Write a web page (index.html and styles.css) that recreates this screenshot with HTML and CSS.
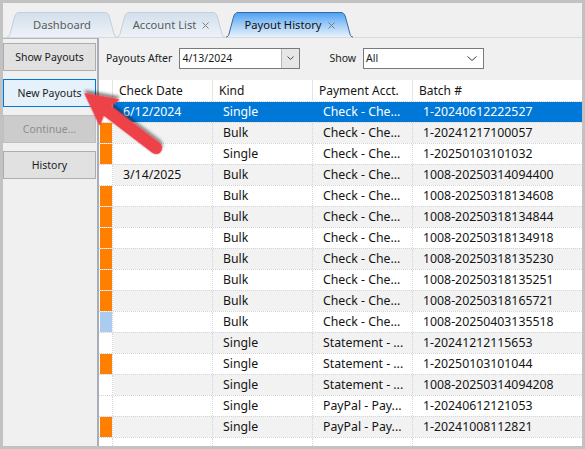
FILE: index.html
```html
<!DOCTYPE html>
<html lang="en">
<head>
<meta charset="utf-8">
<title>Payout History</title>
<link rel="stylesheet" href="styles.css">
</head>
<body>
<div class="window">
  <nav class="tabstrip">
    <div class="tab tab-dashboard">
      <svg class="tab-shape" viewBox="0 0 110 25" preserveAspectRatio="none">
        <defs>
          <linearGradient id="tabIdle1" x1="0" y1="0" x2="0" y2="1">
            <stop offset="0" stop-color="#d1dfed"/>
            <stop offset="1" stop-color="#eef2f7"/>
          </linearGradient>
        </defs>
        <path d="M0,25 C1.5,25 2.5,24 3,22 L7.5,5 C8.3,2 9.8,0.5 12,0.5 H98 C100.2,0.5 101.7,2 102.5,5 L107,22 C107.5,24 108.5,25 110,25" fill="url(#tabIdle1)" stroke="#c6cfda" stroke-width="1"/>
      </svg>
      <span class="tab-label">Dashboard</span>
    </div>
    <div class="tab tab-accounts">
      <svg class="tab-shape" viewBox="0 0 108 25" preserveAspectRatio="none">
        <defs>
          <linearGradient id="tabIdle2" x1="0" y1="0" x2="0" y2="1">
            <stop offset="0" stop-color="#d1dfed"/>
            <stop offset="1" stop-color="#eef2f7"/>
          </linearGradient>
        </defs>
        <path d="M0,25 C1.5,25 2.5,24 3,22 L7.5,5 C8.3,2 9.8,0.5 12,0.5 H96 C98.2,0.5 99.7,2 100.5,5 L105,22 C105.5,24 106.5,25 108,25" fill="url(#tabIdle2)" stroke="#c6cfda" stroke-width="1"/>
      </svg>
      <span class="tab-label">Account List</span>
      <svg class="tab-close" viewBox="0 0 7 7"><path d="M0.5,0.5 L6.5,6.5 M6.5,0.5 L0.5,6.5" stroke="#7d7d7d" stroke-width="1"/></svg>
    </div>
    <div class="tab tab-payouts active">
      <svg class="tab-shape" viewBox="0 0 127 25" preserveAspectRatio="none">
        <defs>
          <linearGradient id="tabActive" x1="0" y1="0" x2="0" y2="1">
            <stop offset="0" stop-color="#4aa1f6"/>
            <stop offset="0.45" stop-color="#98c8f6"/>
            <stop offset="1" stop-color="#e8f2fc"/>
          </linearGradient>
        </defs>
        <path d="M0,25 C1.5,25 2.5,24 3,22 L7.5,5 C8.3,2 9.8,0.5 12,0.5 H115 C117.2,0.5 118.7,2 119.5,5 L124,22 C124.5,24 125.5,25 127,25" fill="url(#tabActive)" stroke="#3a6a9c" stroke-width="1"/>
      </svg>
      <span class="tab-label">Payout History</span>
      <svg class="tab-close" viewBox="0 0 7 7"><path d="M0.5,0.5 L6.5,6.5 M6.5,0.5 L0.5,6.5" stroke="#6d7a88" stroke-width="1"/></svg>
    </div>
  </nav>

  <div class="workspace">
    <aside class="sidebar">
      <button class="side-btn">Show Payouts</button>
      <button class="side-btn focused">New Payouts</button>
      <button class="side-btn" disabled>Continue...</button>
      <button class="side-btn">History</button>
    </aside>

    <section class="main">
      <div class="filters">
        <span class="filter-label">Payouts After</span>
        <div class="combo combo-date">
          <span class="combo-text">4/13/2024</span>
          <span class="combo-btn">
            <svg class="chev-sm" viewBox="0 0 7 4"><polyline points="0.5,0.5 3.5,3.5 6.5,0.5" fill="none" stroke="#4a4a4a" stroke-width="1"/></svg>
          </span>
        </div>
        <span class="filter-label label-show">Show</span>
        <div class="combo combo-show">
          <span class="combo-text">All</span>
          <svg class="chev" viewBox="0 0 10 5"><polyline points="0.5,0.5 5,4.5 9.5,0.5" fill="none" stroke="#3c3c3c" stroke-width="1"/></svg>
        </div>
      </div>

      <div class="grid">
        <div class="row head">
          <div class="cell ind-col"></div>
          <div class="cell">Check Date</div>
          <div class="cell">Kind</div>
          <div class="cell">Payment Acct.</div>
          <div class="cell">Batch #</div>
        </div>
        <div class="row sel">
          <div class="cell ind-col"><span class="ind"></span></div>
          <div class="cell">6/12/2024</div>
          <div class="cell">Single</div>
          <div class="cell">Check - Che...</div>
          <div class="cell">1-20240612222527</div>
        </div>
        <div class="row">
          <div class="cell ind-col"><span class="ind orange"></span></div>
          <div class="cell"></div>
          <div class="cell">Bulk</div>
          <div class="cell">Check - Che...</div>
          <div class="cell">1-20241217100057</div>
        </div>
        <div class="row">
          <div class="cell ind-col"><span class="ind orange"></span></div>
          <div class="cell"></div>
          <div class="cell">Single</div>
          <div class="cell">Check - Che...</div>
          <div class="cell">1-20250103101032</div>
        </div>
        <div class="row">
          <div class="cell ind-col"><span class="ind"></span></div>
          <div class="cell">3/14/2025</div>
          <div class="cell">Bulk</div>
          <div class="cell">Check - Che...</div>
          <div class="cell">1008-20250314094400</div>
        </div>
        <div class="row">
          <div class="cell ind-col"><span class="ind orange"></span></div>
          <div class="cell"></div>
          <div class="cell">Bulk</div>
          <div class="cell">Check - Che...</div>
          <div class="cell">1008-20250318134608</div>
        </div>
        <div class="row">
          <div class="cell ind-col"><span class="ind orange"></span></div>
          <div class="cell"></div>
          <div class="cell">Bulk</div>
          <div class="cell">Check - Che...</div>
          <div class="cell">1008-20250318134844</div>
        </div>
        <div class="row">
          <div class="cell ind-col"><span class="ind orange"></span></div>
          <div class="cell"></div>
          <div class="cell">Bulk</div>
          <div class="cell">Check - Che...</div>
          <div class="cell">1008-20250318134918</div>
        </div>
        <div class="row">
          <div class="cell ind-col"><span class="ind orange"></span></div>
          <div class="cell"></div>
          <div class="cell">Bulk</div>
          <div class="cell">Check - Che...</div>
          <div class="cell">1008-20250318135230</div>
        </div>
        <div class="row">
          <div class="cell ind-col"><span class="ind orange"></span></div>
          <div class="cell"></div>
          <div class="cell">Bulk</div>
          <div class="cell">Check - Che...</div>
          <div class="cell">1008-20250318135251</div>
        </div>
        <div class="row">
          <div class="cell ind-col"><span class="ind orange"></span></div>
          <div class="cell"></div>
          <div class="cell">Bulk</div>
          <div class="cell">Check - Che...</div>
          <div class="cell">1008-20250318165721</div>
        </div>
        <div class="row">
          <div class="cell ind-col"><span class="ind pending"></span></div>
          <div class="cell"></div>
          <div class="cell">Bulk</div>
          <div class="cell">Check - Che...</div>
          <div class="cell">1008-20250403135518</div>
        </div>
        <div class="row">
          <div class="cell ind-col"><span class="ind"></span></div>
          <div class="cell"></div>
          <div class="cell">Single</div>
          <div class="cell">Statement - ...</div>
          <div class="cell">1-20241212115653</div>
        </div>
        <div class="row">
          <div class="cell ind-col"><span class="ind orange"></span></div>
          <div class="cell"></div>
          <div class="cell">Single</div>
          <div class="cell">Statement - ...</div>
          <div class="cell">1-20250103101044</div>
        </div>
        <div class="row">
          <div class="cell ind-col"><span class="ind"></span></div>
          <div class="cell"></div>
          <div class="cell">Single</div>
          <div class="cell">Statement - ...</div>
          <div class="cell">1008-20250314094208</div>
        </div>
        <div class="row">
          <div class="cell ind-col"><span class="ind"></span></div>
          <div class="cell"></div>
          <div class="cell">Single</div>
          <div class="cell">PayPal - Pay...</div>
          <div class="cell">1-20240612121053</div>
        </div>
        <div class="row">
          <div class="cell ind-col"><span class="ind orange"></span></div>
          <div class="cell"></div>
          <div class="cell">Single</div>
          <div class="cell">PayPal - Pay...</div>
          <div class="cell">1-20241008112821</div>
        </div>
        <div class="row">
          <div class="cell ind-col"><span class="ind"></span></div>
          <div class="cell"></div>
          <div class="cell"></div>
          <div class="cell"></div>
          <div class="cell"></div>
        </div>
      </div>
    </section>
  </div>
</div>

<!-- callout arrow pointing at the New Payouts button -->
<svg class="callout" width="585" height="449" viewBox="0 0 585 449">
  <defs>
    <filter id="calloutShadow" x="-20%" y="-20%" width="140%" height="160%">
      <feDropShadow dx="1.5" dy="2.5" stdDeviation="1.8" flood-color="#000" flood-opacity="0.5"/>
    </filter>
  </defs>
  <g transform="translate(156,148) rotate(217.4)" filter="url(#calloutShadow)">
    <path d="M0,-5.5 L62,-5.5 L59,-15.5 L89,0 L59,15.5 L62,5.5 L0,5.5 A5.5,5.5 0 0 1 0,-5.5 Z" fill="#ee4249" stroke="#ee4249" stroke-width="1.5" stroke-linejoin="round"/>
  </g>
</svg>
</body>
</html>
```

FILE: styles.css
```css
* {
  box-sizing: border-box;
}

html,
body {
  margin: 0;
}

body {
  background: #c2c2c2;
  font-family: "Noto Sans", "Open Sans", sans-serif;
  color: #1b1b1b;
  position: relative;
}

.window {
  margin: 3px;
  width: 579px;
  height: 443px;
  background: #f0f0f0;
  display: flex;
  flex-direction: column;
  overflow: hidden;
}

/* ---- tab strip ---- */
.tabstrip {
  flex: none;
  height: 35px;
  display: flex;
  align-items: flex-end;
  padding-left: 4px;
  border-bottom: 1px solid #d5dae2;
}

.tab {
  position: relative;
  height: 25px;
  display: flex;
  align-items: center;
  justify-content: center;
  gap: 6px;
  font-size: 11.2px;
  color: #5b5b5b;
}

.tab-dashboard { width: 110px; }
.tab-accounts { width: 108px; }
.tab-payouts { width: 127px; margin-left: 1px; }

.tab.active {
  color: #111;
}

.tab-shape {
  position: absolute;
  left: 0;
  top: 0;
  width: 100%;
  height: 100%;
  overflow: visible;
}

.tab-label,
.tab-close {
  position: relative;
}

.tab-close {
  width: 7px;
  height: 7px;
  margin-top: 1px;
}

/* ---- body ---- */
.workspace {
  flex: 1;
  display: flex;
  min-height: 0;
}

.sidebar {
  flex: none;
  width: 96px;
  border-top: 1px solid #b6b6b6;
  border-right: 2px solid #a9adb8;
  padding: 4px 1px 0 0;
  display: flex;
  flex-direction: column;
  gap: 8px;
}

.side-btn {
  height: 28px;
  padding: 0;
  font-family: "Noto Sans", "Open Sans", sans-serif;
  font-size: 10.5px;
  color: #1b1b1b;
  background: #e1e1e1;
  border: 1px solid #adadad;
  border-radius: 0;
}

.side-btn.focused {
  background: #e5f1fb;
  border-color: #0078d7;
}

.side-btn:disabled {
  background: #cccccc;
  border-color: #bfbfbf;
  color: #8d8d8d;
}

.main {
  flex: 1;
  min-width: 0;
  display: flex;
  flex-direction: column;
}

/* ---- filter bar ---- */
.filters {
  flex: none;
  height: 42px;
  display: flex;
  align-items: center;
  padding: 0 0 2px 7px;
  font-size: 10.5px;
}

.filter-label {
  margin-right: 7px;
}

.label-show {
  margin-left: 29px;
}

.combo {
  width: 121px;
  height: 21px;
  border: 1px solid #7a7a7a;
  background: #fff;
  display: flex;
  align-items: center;
}

.combo-text {
  flex: 1;
  padding-left: 2px;
}

.combo-btn {
  width: 18px;
  height: 19px;
  background: #e6e6e6;
  border-left: 1px solid #b4b4b4;
  display: flex;
  align-items: center;
  justify-content: center;
}

.chev-sm {
  width: 7px;
  height: 4px;
}

.chev {
  width: 10px;
  height: 5px;
  margin-right: 6px;
}

/* ---- data grid ---- */
.grid {
  flex: 1;
  background: #fff;
  overflow: hidden;
}

.row {
  display: grid;
  grid-template-columns: 14px 100px 100px 100px 1fr;
  height: 21px;
  border-top: 1px dotted #d6d6d6;
  font-size: 12.3px;
  line-height: 20px;
  color: #141414;
}

.row:nth-child(odd) {
  background: #f2f2f2;
}

.cell {
  padding-left: 10px;
  border-right: 1px dotted #d6d6d6;
  white-space: nowrap;
  overflow: hidden;
}

.cell:last-child {
  border-right: none;
}

.cell.ind-col {
  padding-left: 1px;
  background: #fff;
}

.ind {
  display: block;
  height: 100%;
}

.ind.orange {
  background: #ff8000;
}

.ind.pending {
  background: #abcbef;
}

.row.head {
  border-top: none;
  background: #fff;
  font-size: 12px;
  line-height: 21px;
}

.row.head .cell {
  padding-left: 6px;
  border-right: 1px solid #e4e4e4;
}

.row.head .cell:last-child {
  border-right: none;
}

.row.sel .cell:not(.ind-col) {
  background: #0078d7;
  color: #fff;
  border-right-color: #0078d7;
}

/* ---- callout ---- */
.callout {
  position: absolute;
  left: 0;
  top: 0;
  pointer-events: none;
}
```
